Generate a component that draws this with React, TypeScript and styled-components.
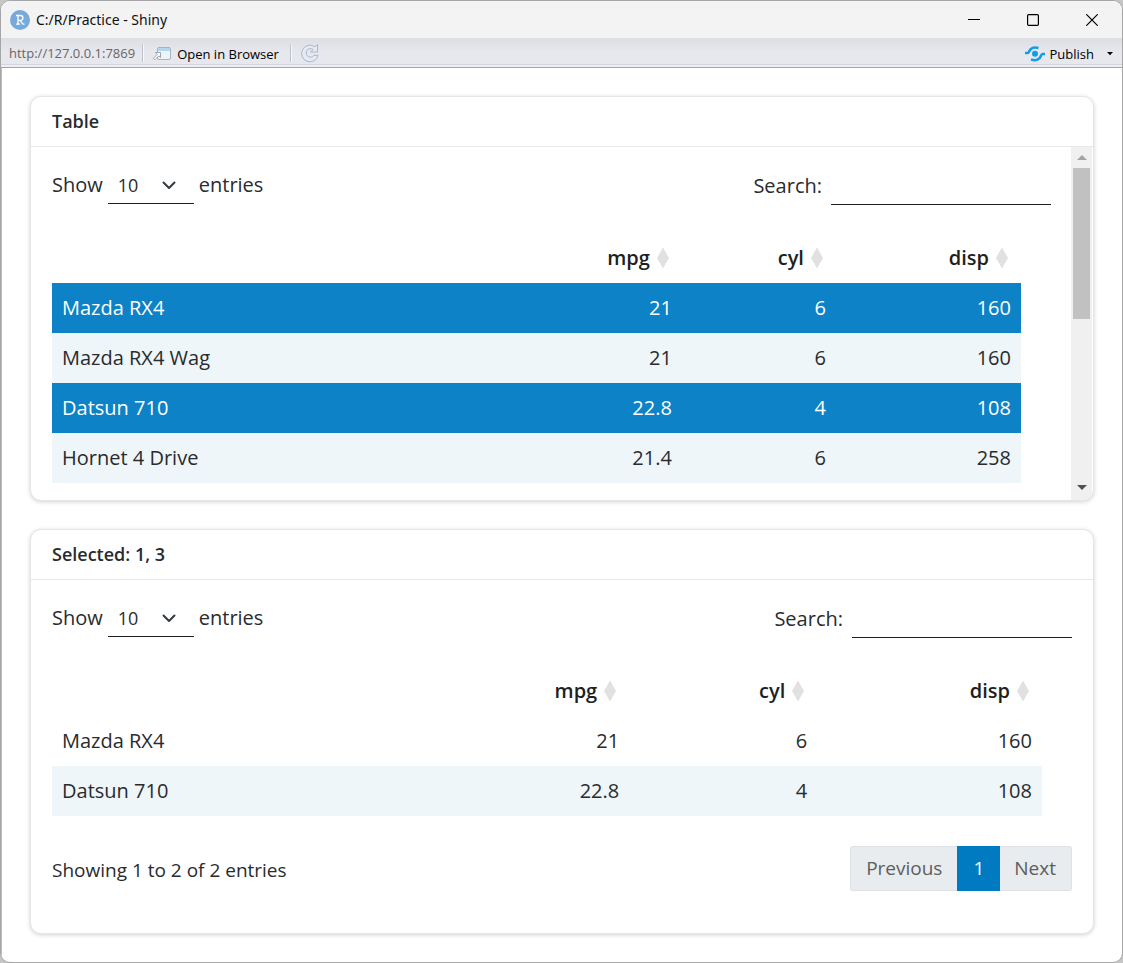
import React, { useId } from "react";
import styled, { createGlobalStyle } from "styled-components";

const GlobalStyle = createGlobalStyle`
  *, *::before, *::after { box-sizing: border-box; }
  body {
    margin: 0;
    background: #c6c6c6;
    color: #292b2e;
    font-family: "Open Sans", "Noto Sans", sans-serif;
    font-size: 20px;
    font-weight: 400;
  }
  button, input, select { font: inherit; color: inherit; }
`;

const Window = styled.div`
  display: flex;
  flex-direction: column;
  min-height: 100vh;
  border: 1px solid #a6a6a6;
  border-radius: 10px;
  background: #fff;
  overflow: hidden;
`;

const TitleBar = styled.header`
  display: flex;
  align-items: center;
  height: 37px;
  padding: 0 1px 0 9px;
  background: #f3f3f3;
`;

const WindowTitle = styled.h1`
  flex: 1;
  margin: 0 0 0 6px;
  color: #111;
  font-family: "Noto Sans", "Open Sans", sans-serif;
  font-size: 14px;
  font-weight: 400;
`;

const CaptionButton = styled.button`
  display: flex;
  align-items: center;
  justify-content: center;
  width: 59px;
  height: 37px;
  padding: 0;
  border: 0;
  background: none;
`;

const Toolbar = styled.nav`
  display: flex;
  align-items: center;
  height: 30px;
  padding: 0 3px 0 8px;
  border-bottom: 1px solid #8aa9db;
  background: linear-gradient(#dcdee4 0, #e6e8ed 14px, #e6e8ed 26px, #d4d7dd 26px, #d4d7dd 27px, #eceef2 27px);
  color: #000;
  font-family: "Open Sans", "Noto Sans", sans-serif;
  font-size: 13px;
  font-weight: 400;
`;

const Address = styled.span`
  color: #666;
`;

const Divider = styled.span`
  width: 2px;
  height: 18px;
  margin: 0 8px 0 11px;
  border-left: 1px solid #bfc2c8;
  border-right: 1px solid #f8f8fa;

  ${Address} + & { margin-left: 7px; }
`;

const ToolButton = styled.button`
  display: flex;
  align-items: center;
  gap: 5px;
  padding: 2px 0 0;
  border: 0;
  background: none;
`;

const Spacer = styled.span`
  flex: 1;
`;

const Page = styled.main`
  display: flex;
  flex: 1;
  flex-direction: column;
  gap: 28px;
  padding: 28px;
  border-left: 1px solid #a9bce0;
`;

const Card = styled.section`
  display: flex;
  flex: 1 0 405px;
  flex-direction: column;
  border: 1px solid #e6e6e6;
  border-radius: 11px;
  background: #fff;
  box-shadow: 0 1px 4px rgba(0, 0, 0, 0.18);
  overflow: hidden;
`;

const CardTitle = styled.h2`
  margin: 0;
  padding: 0 21px 1px;
  border-bottom: 1px solid #e8e8e8;
  font-size: 18px;
  font-weight: 600;
  line-height: 48px;
`;

const CardBody = styled.div`
  display: flex;
  flex: 1;
`;

const TableArea = styled.div<{ $scrolls?: boolean }>`
  flex: 1;
  padding: 20px ${(p) => (p.$scrolls ? 20 : 21)}px 0 21px;
`;

const Controls = styled.div`
  display: flex;
  align-items: flex-start;
  justify-content: space-between;
  height: 66px;
  line-height: 35px;
`;

const Length = styled.label`
  display: flex;
  gap: 5px;
`;

const SelectWrap = styled.span`
  display: grid;
  align-items: center;
  width: 86px;

  select, svg { grid-area: 1 / 1; }
  svg { justify-self: end; margin-right: 18px; pointer-events: none; }
`;

const Select = styled.select`
  width: 100%;
  height: 37px;
  padding: 0 10px;
  border: 0;
  border-bottom: 1px solid #1d1f21;
  border-radius: 0;
  appearance: none;
  background: none;
  font-size: 18px;
`;

const Search = styled.label`
  display: flex;
  gap: 9px;
  line-height: 37px;
`;

const SearchInput = styled.input`
  width: 220px;
  height: 38px;
  padding: 0 10px;
  border: 0;
  border-bottom: 1px solid #1d1f21;
  background: none;
`;

const Table = styled.table`
  width: calc(100% - 30px);
  border-collapse: collapse;
  table-layout: fixed;
`;

const Col = styled.col<{ $share?: number }>`
  width: ${(p) => (p.$share ? `${p.$share}%` : "auto")};
`;

const Th = styled.th`
  height: 50px;
  padding: 0 10px 1px;
  color: #1d1f21;
  font-weight: 600;
  text-align: right;
`;

const SortButton = styled.button`
  display: inline-flex;
  align-items: center;
  gap: 7px;
  padding: 0 3px 0 0;
  border: 0;
  background: none;
`;

const Row = styled.tr<{ $tone: "plain" | "stripe" | "selected" }>`
  background: ${(p) => ({ plain: "#fff", stripe: "#eef6fa", selected: "#0d82c6" })[p.$tone]};
  color: ${(p) => (p.$tone === "selected" ? "#fff" : "inherit")};
`;

const Td = styled.td`
  height: 50px;
  padding: 0 10px 1px;
  text-align: right;

  &:first-child { text-align: left; }
`;

const ScrollTrack = styled.div`
  display: flex;
  flex-direction: column;
  align-items: center;
  width: 21px;
  margin-right: 1px;
  padding-bottom: 2px;
  background: #f0f0f0;
`;

const ScrollButton = styled.button`
  display: flex;
  align-items: center;
  justify-content: center;
  width: 21px;
  height: 21px;
  padding: 0;
  border: 0;
  background: none;
`;

const ScrollLane = styled.div`
  flex: 1;
  display: flex;
  flex-direction: column;
`;

const ScrollThumb = styled.div`
  flex: 0 0 49%;
  width: 17px;
  background: #c1c1c1;
`;

const Footer = styled.div`
  display: flex;
  align-items: flex-start;
  justify-content: space-between;
  margin-top: 30px;
  font-size: 19px;
`;

const Info = styled.p`
  margin: 0;
  line-height: 48px;
`;

const Pagination = styled.nav`
  display: flex;
  height: 45px;
`;

const PageButton = styled.button<{ $active?: boolean; $end?: "left" | "right" }>`
  padding: 0 15px 1px ${(p) => (p.$end === "right" ? 14 : 15)}px;
  border: 1px solid ${(p) => (p.$active ? "#007bc2" : "#dee2e6")};
  border-left-width: ${(p) => (p.$end === "right" ? 0 : 1)}px;
  border-right-width: ${(p) => (p.$end === "left" ? 0 : 1)}px;
  border-radius: ${(p) => (p.$end === "left" ? "3px 0 0 3px" : p.$end === "right" ? "0 3px 3px 0" : "0")};
  background: ${(p) => (p.$active ? "#007bc2" : "#e9ecef")};
  color: ${(p) => (p.$active ? "#fff" : "#5c5e60")};
`;

type Car = { name: string; mpg: string; cyl: string; disp: string; tone: "plain" | "stripe" | "selected" };

const cars: Car[] = [
  { name: "Mazda RX4", mpg: "21", cyl: "6", disp: "160", tone: "selected" },
  { name: "Mazda RX4 Wag", mpg: "21", cyl: "6", disp: "160", tone: "stripe" },
  { name: "Datsun 710", mpg: "22.8", cyl: "4", disp: "108", tone: "selected" },
  { name: "Hornet 4 Drive", mpg: "21.4", cyl: "6", disp: "258", tone: "stripe" },
];

const selectedCars: Car[] = [
  { name: "Mazda RX4", mpg: "21", cyl: "6", disp: "160", tone: "plain" },
  { name: "Datsun 710", mpg: "22.8", cyl: "4", disp: "108", tone: "stripe" },
];

function TableControls() {
  const id = useId();
  return (
    <Controls>
      <Length htmlFor={`${id}-length`}>
        Show
        <SelectWrap>
          <Select id={`${id}-length`} defaultValue="10">
            <option>10</option>
          </Select>
          <svg width="14" height="10" viewBox="0 0 14 10" fill="none" stroke="#343a40" strokeWidth="2" strokeLinecap="round" strokeLinejoin="round" aria-hidden="true">
            <path d="M1.5 1.500 7 7 12.500 1.500" />
          </svg>
        </SelectWrap>
        entries
      </Length>
      <Search htmlFor={`${id}-search`}>
        Search:
        <SearchInput id={`${id}-search`} type="search" />
      </Search>
    </Controls>
  );
}

function CarTable({ rows, shares }: { rows: Car[]; shares: number[] }) {
  return (
    <Table>
      <colgroup>
        <Col />
        {shares.map((s) => <Col key={s} $share={s} />)}
      </colgroup>
      <thead>
        <tr>
          <Th as="td" />
          {["mpg", "cyl", "disp"].map((name) => (
            <Th key={name} scope="col">
              <SortButton type="button">
                {name}
                <svg width="12" height="22" viewBox="0 0 12 22" fill="#e1e1e1" aria-hidden="true">
                  <path d="M6 .5 12 11 6 21.500 0 11z" />
                </svg>
              </SortButton>
            </Th>
          ))}
        </tr>
      </thead>
      <tbody>
        {rows.map((r) => (
          <Row key={r.name} $tone={r.tone}>
            <Td>{r.name}</Td>
            <Td>{r.mpg}</Td>
            <Td>{r.cyl}</Td>
            <Td>{r.disp}</Td>
          </Row>
        ))}
      </tbody>
    </Table>
  );
}

export default function App() {
  return (
    <>
      <GlobalStyle />
      <Window>
        <TitleBar>
          <svg width="20" height="20" viewBox="0 0 20 20" aria-hidden="true">
            <circle cx="10" cy="10" r="10" fill="#75aadb" />
            <g fill="none" stroke="#fff" strokeWidth="1.300">
              <path d="M6 5.500h4.500a2.400 2.400 0 0 1 0 4.800H8M8 5.500v8.700M6 14.200h4M10 10.300l3 3.900h1.500" />
            </g>
          </svg>
          <WindowTitle>C:/R/Practice - Shiny</WindowTitle>
          <CaptionButton type="button" aria-label="Minimize">
            <svg width="12" height="12" viewBox="0 0 12 12" stroke="#000"><path d="M0 5.500h12" /></svg>
          </CaptionButton>
          <CaptionButton type="button" aria-label="Maximize">
            <svg width="12" height="12" viewBox="0 0 12 12" fill="none" stroke="#000" strokeWidth="1.200"><rect x=".6" y=".6" width="10.800" height="10.800" rx="1.200" /></svg>
          </CaptionButton>
          <CaptionButton type="button" aria-label="Close">
            <svg width="12" height="12" viewBox="0 0 12 12" stroke="#000" strokeWidth="1.200"><path d="M.3.3l11.400 11.400M11.700.3.3 11.700" /></svg>
          </CaptionButton>
        </TitleBar>
        <Toolbar>
          <Address>http://127.0.0.1:7869</Address>
          <Divider />
          <ToolButton type="button">
            <svg width="20" height="16" viewBox="0 0 20 16" fill="none" aria-hidden="true">
              <rect x="5.500" y="1.500" width="13" height="12" rx="1.500" fill="#eef3f8" stroke="#a3b4c6" />
              <path d="M6 2h12v3H6z" fill="#b4d5ee" />
              <path d="M3.500 6.500h5v5L6.800 9.800l-4 4-1.500-1.500 4-4z" fill="#fff" stroke="#8d9cab" strokeWidth=".9" />
            </svg>
            Open in Browser
          </ToolButton>
          <Divider />
          <ToolButton type="button" aria-label="Reload">
            <svg width="20" height="20" viewBox="0 0 20 20" fill="none" aria-hidden="true">
              <path d="M14.800 2.800 17.500 .8V8h-7l2.600-2.500A4.300 4.300 0 1 0 14 11.300h4A8.300 8.300 0 1 1 14.800 2.800z" fill="#e4ebf5" stroke="#a9b7cb" strokeLinejoin="round" />
            </svg>
          </ToolButton>
          <Spacer />
          <ToolButton type="button">
            <svg width="20" height="16" viewBox="0 0 20 16" fill="none" stroke="#109ceb" strokeWidth="2.600" aria-hidden="true">
              <path d="M0 7h2.500C4 7 4 5 5.500 3.400S9 .8 13.500 2M20 8h-2.500c-1.500 0-1.500 2.500-3 4.200S11 15.200 6 13.500" />
              <circle cx="10" cy="7.800" r="3" fill="#109ceb" stroke="none" />
            </svg>
            Publish
            <svg width="20" height="6" viewBox="0 0 20 6" aria-hidden="true"><path d="M8 1h6l-3 3.200z" fill="#000" /></svg>
          </ToolButton>
        </Toolbar>
        <Page>
          <Card>
            <CardTitle>Table</CardTitle>
            <CardBody>
              <TableArea $scrolls>
                <TableControls />
                <CarTable rows={cars} shares={[18, 15.9, 19.1]} />
              </TableArea>
              <ScrollTrack>
                <ScrollButton type="button" aria-label="Scroll up">
                  <svg width="10" height="5" viewBox="0 0 10 5" fill="#a3a3a3"><path d="M5 0l5 5H0z" /></svg>
                </ScrollButton>
                <ScrollLane><ScrollThumb /></ScrollLane>
                <ScrollButton type="button" aria-label="Scroll down">
                  <svg width="10" height="5" viewBox="0 0 10 5" fill="#505050"><path d="M5 5L0 0h10z" /></svg>
                </ScrollButton>
              </ScrollTrack>
            </CardBody>
          </Card>
          <Card>
            <CardTitle>Selected: 1, 3</CardTitle>
            <CardBody>
              <TableArea>
                <TableControls />
                <CarTable rows={selectedCars} shares={[18, 19, 22.7]} />
                <Footer>
                  <Info>Showing 1 to 2 of 2 entries</Info>
                  <Pagination aria-label="Table pages">
                    <PageButton type="button" $end="left">Previous</PageButton>
                    <PageButton type="button" $active>1</PageButton>
                    <PageButton type="button" $end="right">Next</PageButton>
                  </Pagination>
                </Footer>
              </TableArea>
            </CardBody>
          </Card>
        </Page>
      </Window>
    </>
  );
}
